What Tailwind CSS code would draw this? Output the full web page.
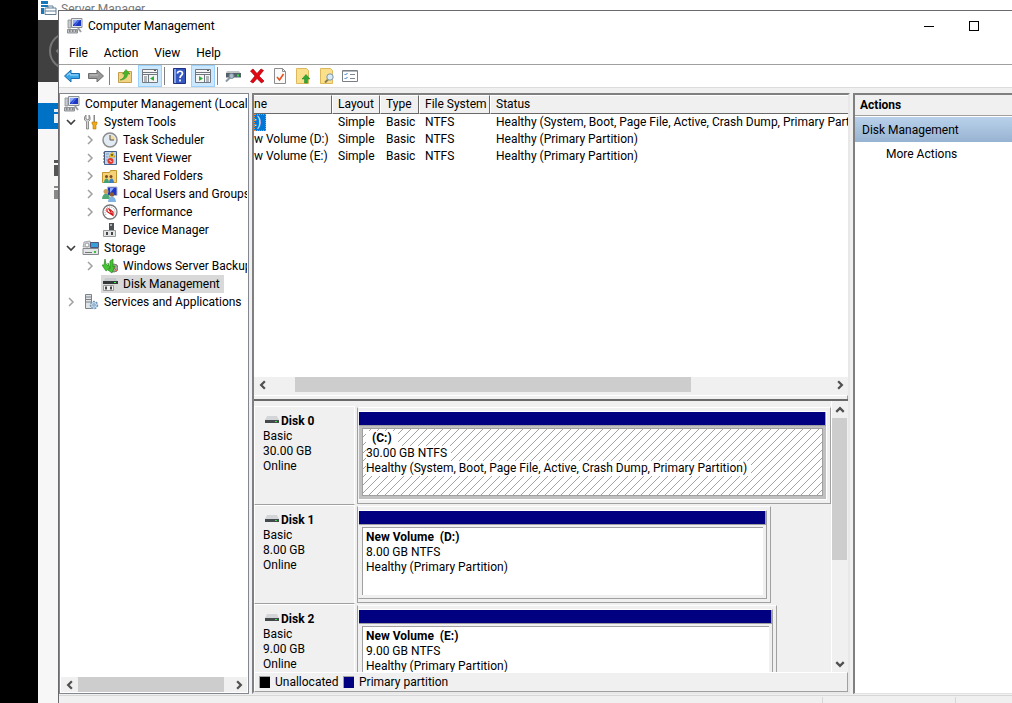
<!DOCTYPE html>
<html lang="en">
<head>
    <!-- Page setup -->
    <meta charset="UTF-8">
    <meta name="viewport" content="width=device-width, initial-scale=1.0">
    <title>Computer Management</title>
    <!-- Styling library -->
    <script src="https://cdn.jsdelivr.net/npm/@tailwindcss/browser@4"></script>
</head>
<body class="flex h-screen overflow-hidden bg-black pl-[38px] font-[Roboto,'Open_Sans',sans-serif] text-xs text-black">
    <!-- Shared icons -->
    <svg class="hidden">
        <symbol id="computer" viewBox="0 0 16 16">
            <path d="M1 2h3v8H1z" fill="#c9ccd0" stroke="#7d8288" stroke-width=".7"/>
            <path d="M4.500.5h10.500v9H4.500z" fill="#e4e7ea" stroke="#8a9098"/>
            <path d="M6 2h8v6H6z" fill="#1b35c4"/>
            <path d="M6 2h5L6 7z" fill="#8fabf7"/>
            <path d="M11 2h2L8 8H7z" fill="#4d6fe6"/>
            <path d="M11 10l3 4" stroke="#9a9ea3" stroke-width="2"/>
            <path d="M.5 11.500h10v3.500H.5z" fill="#c4c6c8" stroke="#777b80" stroke-width=".8"/>
            <path d="M2 13h1.500M5 13h1.500M8 13h1.500" stroke="#444"/>
        </symbol>
        <symbol id="drive" viewBox="0 0 14 8">
            <path d="M2 0h10l2 4H0z" fill="#d3d5d8"/>
            <path d="M0 4h14v3H0z" fill="#44494c"/>
            <path d="M10 5h2v1h-2z" fill="#35e04a"/>
        </symbol>
        <symbol id="left" viewBox="0 0 8 8"><path d="M5.500 1L2.500 4l3 3" fill="none" stroke="#505050" stroke-width="1.800"/></symbol>
        <symbol id="right" viewBox="0 0 8 8"><path d="M2.500 1l3 3-3 3" fill="none" stroke="#505050" stroke-width="1.800"/></symbol>
        <symbol id="closed" viewBox="0 0 8 10"><path d="M2 1l4 4-4 4" fill="none" stroke="#a0a0a0" stroke-width="1.500"/></symbol>
        <symbol id="open" viewBox="0 0 10 8"><path d="M1 2l4 4 4-4" fill="none" stroke="#404040" stroke-width="1.700"/></symbol>
    </svg>

    <main class="relative min-w-0 flex-1 bg-[#f7f7f7]">
        <!-- Server Manager window behind -->
        <section class="flex h-full flex-col">
            <div class="flex h-5 shrink-0 items-start gap-1 bg-white pl-0.5 text-[#777]">
                <svg class="h-4 w-[17px]" viewBox="0 0 17 16">
                    <path d="M1 1h7v3H1zM1 5h7v2H1zM1 8h3v6H1z" fill="#1976b8"/>
                    <path d="M5 8h11v6.500H5zM8 8V6h5v2M5 11h11" fill="#fff" stroke="#5f7f96"/>
                </svg>
                <span class="leading-[18px]">Server Manager</span>
            </div>
            <div class="h-[62px] shrink-0 bg-[#404040] pl-2.5">
                <svg class="h-[62px] w-10" viewBox="0 0 40 62">
                    <circle cx="20" cy="31" r="18" fill="none" stroke="#777" stroke-width="2"/>
                    <path d="M14 26l-5 5 5 5" fill="none" stroke="#777" stroke-width="2"/>
                </svg>
            </div>
            <div class="mt-[21px] flex h-[26px] w-24 shrink-0 items-center bg-[#0072c6] pl-4">
                <svg class="h-[14px] w-4" viewBox="0 0 16 14"><path d="M0 0h16v3H0zM0 5h16v9H0z" fill="#e6f1fa"/></svg>
            </div>
            <svg class="mt-[31px] ml-4 h-10 w-4 shrink-0" viewBox="0 0 16 40">
                <path d="M0 0h16v3H0zM0 5h16v11H0z" fill="#555"/>
                <path d="M0 26h16v2H0zM0 30h16v9H0z" fill="#888"/>
            </svg>
        </section>

        <!-- Computer Management window -->
        <section class="absolute top-2.5 right-0 bottom-0 left-5 flex flex-col border-t border-l border-[#6b696d] bg-[#f0f0f0]">
            <!-- Title bar -->
            <header class="flex h-[30px] shrink-0 items-center bg-white pl-2">
                <svg class="h-4 w-4"><use href="#computer"/></svg>
                <h1 class="ml-[5px] flex-1">Computer Management</h1>
                <button class="flex h-full w-[45px] items-center justify-center" aria-label="Minimize">
                    <span class="h-px w-2.5 bg-black"></span>
                </button>
                <button class="mr-4 flex h-full w-[45px] items-center justify-center" aria-label="Maximize">
                    <span class="h-2.5 w-2.5 border border-black"></span>
                </button>
            </header>
            <!-- Menu -->
            <nav class="flex h-6 shrink-0 items-center gap-4 border-b border-[#a0a0a0] bg-white pl-2.5">
                <button>File</button>
                <button>Action</button>
                <button>View</button>
                <button>Help</button>
            </nav>
            <!-- Toolbar -->
            <div class="flex h-[23px] shrink-0 items-start border-b border-[#dcdcdc] bg-white pl-px">
                <button class="flex h-[22px] w-6 items-center justify-center" aria-label="Back">
                    <svg class="h-4 w-4" viewBox="0 0 16 16"><path d="M.5 8L7 2v3.500h8.500v5H7V14z" fill="#3aa5e8" stroke="#1b6cae"/><path d="M3 7.500L6 5v2h8" fill="none" stroke="#a5dcfa"/></svg>
                </button>
                <button class="flex h-[22px] w-[23px] items-center justify-center" aria-label="Forward">
                    <svg class="h-4 w-4" viewBox="0 0 16 16"><path d="M15.500 8L9 2v3.500H.5v5H9V14z" fill="#999" stroke="#6e6e6e"/><path d="M2 7h8" stroke="#c4c4c4"/></svg>
                </button>
                <span class="mx-0.5 mt-0.5 h-[18px] w-px bg-[#808080]"></span>
                <button class="flex h-[22px] w-[26px] items-center justify-center" aria-label="Up one level">
                    <svg class="h-4 w-4" viewBox="0 0 16 16"><path d="M1.500 4.500h5l1-1h7v11h-13z" fill="#f0d385" stroke="#c4a04d"/><path d="M3 12c3-1 4.500-3 4.500-6H5.500L9 1.500 13 6h-2.500c0 3.500-3 6-7.500 6z" fill="#46b52d" stroke="#2f8a1d" stroke-width=".5"/></svg>
                </button>
                <button class="flex h-[22px] w-6 items-center justify-center border border-[#99d1ff] bg-[#cce8ff]" aria-label="Show console tree">
                    <svg class="h-3.5 w-4" viewBox="0 0 16 14"><path d="M.5.5h15v13H.5z" fill="#f5f5f5" stroke="#70777f"/><path d="M1 3.500h14M1 5.500h14M6.500 6v8" stroke="#70777f"/><path d="M12 1.500h2" stroke="#555"/><path d="M2 8h3M2 10h3M2 12h3" stroke="#70777f"/><path d="M12 7v5L8 9.500z" fill="#2eae3c"/></svg>
                </button>
                <span class="mx-0.5 mt-0.5 h-[18px] w-px bg-[#808080]"></span>
                <button class="flex h-[22px] w-6 items-center justify-center" aria-label="Help topics">
                    <svg class="h-4 w-4" viewBox="0 0 16 16"><path d="M2.500.5h12v15h-12z" fill="#3558c0" stroke="#1d2f7e"/><path d="M3 1h2v14H3z" fill="#8ba2e4"/><path d="M6.500 5.500c0-3 5-3 5 0 0 2-2.500 2-2.500 4.500M9 11.500v2" fill="none" stroke="#fff" stroke-width="1.700"/></svg>
                </button>
                <button class="flex h-[22px] w-6 items-center justify-center border border-[#99d1ff] bg-[#cce8ff]" aria-label="Show action pane">
                    <svg class="h-3.5 w-4" viewBox="0 0 16 14"><path d="M.5.5h15v13H.5z" fill="#f5f5f5" stroke="#70777f"/><path d="M1 3.500h14M1 5.500h14M9.500 6v8" stroke="#70777f"/><path d="M12 1.500h2" stroke="#555"/><path d="M11 8h3M11 10h3M11 12h3" stroke="#70777f"/><path d="M4 7v5l4-2.500z" fill="#2eae3c"/></svg>
                </button>
                <span class="mr-[3px] ml-0.5 mt-0.5 h-[18px] w-px bg-[#808080]"></span>
                <button class="flex h-[22px] w-6 items-center justify-center" aria-label="Connect">
                    <svg class="h-4 w-4" viewBox="0 0 16 16"><path d="M2 3h12l1.500 2H1z" fill="#c3c6c9"/><path d="M1 5h15v4.500H1z" fill="#52606a"/><path d="M12 6.500h2v2h-2z" fill="#2de048"/><path d="M1 13.500l4-4" stroke="#8b97a1" stroke-width="2"/><circle cx="6.500" cy="8" r="2.500" fill="#a8bccb" stroke="#77838c"/></svg>
                </button>
                <button class="flex h-[22px] w-[23px] items-center justify-center" aria-label="Delete">
                    <svg class="h-4 w-4" viewBox="0 0 16 16"><path d="M1.500 3l2.500-2 4 4.500L12 1l2.500 1.500-4.500 5.500 5 5-2.500 2L8 10.500 4 15l-2.500-1.500L6 8z" fill="#e30613" stroke="#a3000b" stroke-width=".7"/></svg>
                </button>
                <button class="flex h-[22px] w-[23px] items-center justify-center" aria-label="Properties">
                    <svg class="h-4 w-4" viewBox="0 0 16 16"><path d="M2.500.5h8l3 3v12h-11z" fill="#fafafa" stroke="#8c8c8c"/><path d="M10.500.5v3h3" fill="none" stroke="#8c8c8c"/><path d="M5 9l2.500 3L11.500 6" fill="none" stroke="#e8501e" stroke-width="1.600"/></svg>
                </button>
                <button class="flex h-[22px] w-6 items-center justify-center" aria-label="Export">
                    <svg class="h-4 w-4" viewBox="0 0 16 16"><path d="M1.500.5h10l2 2v13h-12z" fill="#fbe08c" stroke="#dcb95c"/><path d="M9.500 15v-4H7l4-4.500 4 4.500h-2.500v4z" fill="#2fa836" stroke="#1d8324" stroke-width=".5"/></svg>
                </button>
                <button class="flex h-[22px] w-[23px] items-center justify-center" aria-label="Find">
                    <svg class="h-4 w-4" viewBox="0 0 16 16"><path d="M1.500.5h10l2 2v13h-12z" fill="#fbe08c" stroke="#dcb95c"/><path d="M6 14.500l3-3" stroke="#8d7a53" stroke-width="2"/><circle cx="11" cy="9" r="3.200" fill="#d8ecf8" stroke="#7f95a5"/></svg>
                </button>
                <button class="flex h-[22px] w-[23px] items-center justify-center" aria-label="Settings">
                    <svg class="h-3.5 w-4" viewBox="0 0 16 14"><path d="M.5 1.500h15v11H.5z" fill="#fff" stroke="#7a7f85"/><path d="M1 2.500h14" stroke="#b5bac0"/><path d="M2.500 5l1 1 2-2M2.500 9l1 1 2-2" fill="none" stroke="#2a7fd4"/><path d="M8 5.500h5M8 9.500h5" stroke="#808890"/></svg>
                </button>
            </div>

            <div class="flex min-h-0 flex-1 gap-[3px] pt-[5px]">
                <!-- Console tree -->
                <aside class="flex w-[190px] shrink-0 flex-col overflow-hidden border border-[#828790] bg-white px-px pt-px">
                    <ul class="flex-1 leading-[18px] whitespace-nowrap">
                        <li class="flex h-[18px] items-center overflow-hidden pl-[3px]">
                            <svg class="mr-[5px] h-4 w-4 shrink-0"><use href="#computer"/></svg>Computer Management (Local
                        </li>
                        <li class="flex h-[18px] items-center pl-[5px]">
                            <svg class="mr-[7px] h-2 w-2.5"><use href="#open"/></svg>
                            <svg class="mr-[5px] h-4 w-4" viewBox="0 0 16 16"><path d="M3 1v4l2 1 1-1V1l1 2v3L5.500 7.500V15h-2V7.500L1.500 6V3z" fill="#d8d8d8" stroke="#777" stroke-width=".8"/><path d="M10.500 1h1.500v7h-1.500z" fill="#888"/><path d="M9 8h5v2l-1 1v4H10v-4L9 10z" fill="#f0a81a" stroke="#b87807" stroke-width=".6"/></svg>System Tools
                        </li>
                        <li class="flex h-[18px] items-center pl-[25px]">
                            <svg class="mr-2 h-2.5 w-2"><use href="#closed"/></svg>
                            <svg class="mr-[5px] h-4 w-4" viewBox="0 0 16 16"><circle cx="8" cy="8" r="7" fill="#e2ebf3" stroke="#8c8c8c" stroke-width="1.500"/><path d="M8 8V3a5 5 0 0 1 5 5z" fill="#f3dba0"/><path d="M8 3v5h4" fill="none" stroke="#555"/></svg>Task Scheduler
                        </li>
                        <li class="flex h-[18px] items-center pl-[25px]">
                            <svg class="mr-2 h-2.5 w-2"><use href="#closed"/></svg>
                            <svg class="mr-[5px] h-4 w-4" viewBox="0 0 16 16"><path d="M2.500 1.500h12v13h-12z" fill="#c0d3ea" stroke="#44618e"/><path d="M4 4h3M4 7h2M4 10h2" stroke="#7f9cc6"/><path d="M1 3h2M1 6h2M1 9h2M1 12h2" stroke="#555"/><path d="M10 2l3 5H7z" fill="#ffd92e" stroke="#b38b00" stroke-width=".6"/><path d="M10 4v2" stroke="#000"/><circle cx="8.500" cy="11" r="3" fill="#e23b2c"/><path d="M7.500 10l2 2" stroke="#fff"/></svg>Event Viewer
                        </li>
                        <li class="flex h-[18px] items-center pl-[25px]">
                            <svg class="mr-2 h-2.5 w-2"><use href="#closed"/></svg>
                            <svg class="mr-[5px] h-4 w-4" viewBox="0 0 16 16"><path d="M.5 4.500h7l1-2h6v12H.5z" fill="#f5d276" stroke="#bf962f"/><circle cx="4.500" cy="8.500" r="1.500" fill="#7a4a22"/><circle cx="9" cy="8.500" r="1.500" fill="#7a4a22"/><path d="M2 15c0-6 5-6 5 0z" fill="#3fa07c"/><path d="M7 15c0-6 5-6 5 0z" fill="#3e7fc4"/></svg>Shared Folders
                        </li>
                        <li class="flex h-[18px] items-center overflow-hidden pl-[25px]">
                            <svg class="mr-2 h-2.5 w-2 shrink-0"><use href="#closed"/></svg>
                            <svg class="mr-[5px] h-4 w-4 shrink-0" viewBox="0 0 16 16"><path d="M5.500 1h9.500v8.500H5.500z" fill="#1b35c4" stroke="#b5bbc4"/><path d="M8 2h4L8 7z" fill="#8caaf8"/><circle cx="4" cy="5.500" r="2.500" fill="#c9a05b"/><path d="M0 13c0-7 8-7 8 0z" fill="#4fa878"/><circle cx="10" cy="8.500" r="2.300" fill="#8d5a34"/><path d="M6 16c0-7 8-7 8 0z" fill="#7fb3e3"/></svg>Local Users and Groups
                        </li>
                        <li class="flex h-[18px] items-center pl-[25px]">
                            <svg class="mr-2 h-2.5 w-2"><use href="#closed"/></svg>
                            <svg class="mr-[5px] h-4 w-4" viewBox="0 0 16 16"><circle cx="8" cy="8" r="7" fill="#fff" stroke="#777" stroke-width="1.300"/><path d="M4 11A5 5 0 1 1 12 11" fill="none" stroke="#999" stroke-dasharray="1 1"/><path d="M5 4.500v3l6 4V8L6.500 4.500l4 6.500" fill="none" stroke="#d41414" stroke-width="1.200"/></svg>Performance
                        </li>
                        <li class="flex h-[18px] items-center pl-[41px]">
                            <svg class="mr-[5px] h-4 w-4" viewBox="0 0 16 16"><path d="M7 1h5v8H7z" fill="#4d5256"/><path d="M8 2h2v2H8z" fill="#a8adb1"/><path d="M1.500 8.500h12v6h-12z" fill="#e4e5e6" stroke="#999"/><path d="M4 10h2v3H4zM9 10h2v3H9z" fill="#444"/></svg>Device Manager
                        </li>
                        <li class="flex h-[18px] items-center pl-[5px]">
                            <svg class="mr-1.5 h-2 w-2.5"><use href="#open"/></svg>
                            <svg class="mr-[5px] h-4 w-[17px]" viewBox="0 0 17 16"><path d="M2 2l6-1 2 6H1z" fill="#d6dade" stroke="#8a8f94" stroke-width=".7"/><circle cx="5" cy="5" r="2" fill="#fff" stroke="#999"/><path d="M8.500 2.500h8v5h-8z" fill="#36a1d8" stroke="#557"/><path d="M1 8.500h15.500v6H1z" fill="#e3e4e6" stroke="#83878b"/><path d="M3 12.500h7" stroke="#777"/><path d="M12 11h2v2h-2z" fill="#36c140"/></svg>Storage
                        </li>
                        <li class="flex h-[18px] items-center overflow-hidden pl-[25px]">
                            <svg class="mr-2 h-2.5 w-2 shrink-0"><use href="#closed"/></svg>
                            <svg class="mr-[5px] h-4 w-4 shrink-0" viewBox="0 0 16 16"><circle cx="12" cy="10" r="4" fill="#a9a2a0" stroke="#777"/><path d="M12 10l3 3" stroke="#d85c43"/><path d="M3 1l1 5 2 2V5l2 5-4 3L0 7h2zM8 3l3-2v8l2-1-3 7-4-3 2-1z" fill="#45c435" stroke="#2a8a1e" stroke-width=".7"/></svg>Windows Server Backup
                        </li>
                        <li class="flex h-[18px] items-center pl-10">
                            <span class="flex items-center bg-[#d9d9d9] pr-1 pl-px"><svg class="mr-[5px] h-4 w-4" viewBox="0 0 16 16"><path d="M3 2h11l1 3H2z" fill="#c7cacc"/><path d="M1 5h15v3H1z" fill="#34383a"/><path d="M12 6h2v1h-2z" fill="#3cff50"/><path d="M1.500 9.500h10v5h-10z" fill="#f0f0f0" stroke="#999"/><path d="M3 10.500h2v3H3zM8 10.500h2v3H8z" fill="#444"/></svg>Disk Management</span>
                        </li>
                        <li class="flex h-[18px] items-center pl-1.5">
                            <svg class="mr-2 h-2.5 w-2"><use href="#closed"/></svg>
                            <svg class="mr-[5px] h-4 w-4" viewBox="0 0 16 16"><path d="M2.500.5h6v14h-6z" fill="#dfe3e6" stroke="#7b8288"/><path d="M3 3h5M3 5.500h5M3 8h5" stroke="#7b8288"/><circle cx="11" cy="11" r="3.500" fill="#c7dcee" stroke="#6e93b5" stroke-width="1.500" stroke-dasharray="2 1"/><circle cx="11" cy="11" r="1.200" fill="#fff" stroke="#6e93b5"/></svg>Services and Applications
                        </li>
                    </ul>
                    <!-- Horizontal scrollbar -->
                    <div class="mb-px flex h-[15px] items-center bg-[#f0f0f0]">
                        <button class="flex h-full w-[17px] items-center justify-center" aria-label="Scroll left"><svg class="h-2.5 w-2.5"><use href="#left"/></svg></button>
                        <div class="flex h-full flex-1 pr-1.5"><div class="h-full flex-1 bg-[#cdcdcd]"></div></div>
                        <button class="flex h-full w-[17px] items-center justify-center" aria-label="Scroll right"><svg class="h-2.5 w-2.5"><use href="#right"/></svg></button>
                    </div>
                </aside>

                <!-- Disk Management -->
                <section class="flex min-w-0 flex-1 flex-col border-2 border-t-[#808080] border-r-[#e8e8e8] border-b-[#e8e8e8] border-l-[#808080]">
                    <!-- Volume list -->
                    <div class="flex h-[306px] shrink-0 flex-col border-b-2 border-[#696969]">
                        <div class="min-h-0 flex-1 overflow-hidden bg-white">
                            <table class="w-full table-fixed border-separate border-spacing-0 text-left leading-[17px] whitespace-nowrap">
                                <colgroup><col class="w-[78px]"><col class="w-12"><col class="w-[39px]"><col class="w-[71px]"><col></colgroup>
                                <thead class="bg-[#f0f0f0]">
                                    <tr>
                                        <th class="h-[19px] border-t border-r border-b border-t-white border-r-[#696969] border-b-[#696969] p-0 font-normal">ne</th>
                                        <th class="border border-t-white border-r-[#696969] border-b-[#696969] border-l-white p-0 pl-[5px] font-normal">Layout</th>
                                        <th class="border border-t-white border-r-[#696969] border-b-[#696969] border-l-white p-0 pl-[5px] font-normal">Type</th>
                                        <th class="border border-t-white border-r-[#696969] border-b-[#696969] border-l-white p-0 pl-[5px] font-normal">File System</th>
                                        <th class="border-t border-b border-l border-t-white border-b-[#696969] border-l-white p-0 pl-[5px] font-normal">Status</th>
                                    </tr>
                                </thead>
                                <tbody>
                                    <tr>
                                        <td class="p-0"><span class="block w-3 bg-[#0078d7] text-white outline-1 -outline-offset-1 outline-dotted outline-[#ff8728]">:)</span></td>
                                        <td class="p-0 pl-1.5">Simple</td>
                                        <td class="p-0 pl-1.5">Basic</td>
                                        <td class="p-0 pl-1.5">NTFS</td>
                                        <td class="overflow-hidden p-0 pl-1.5">Healthy (System, Boot, Page File, Active, Crash Dump, Primary Part</td>
                                    </tr>
                                    <tr>
                                        <td class="p-0">w Volume (D:)</td>
                                        <td class="p-0 pl-1.5">Simple</td>
                                        <td class="p-0 pl-1.5">Basic</td>
                                        <td class="p-0 pl-1.5">NTFS</td>
                                        <td class="p-0 pl-1.5">Healthy (Primary Partition)</td>
                                    </tr>
                                    <tr>
                                        <td class="p-0">w Volume (E:)</td>
                                        <td class="p-0 pl-1.5">Simple</td>
                                        <td class="p-0 pl-1.5">Basic</td>
                                        <td class="p-0 pl-1.5">NTFS</td>
                                        <td class="p-0 pl-1.5">Healthy (Primary Partition)</td>
                                    </tr>
                                </tbody>
                            </table>
                        </div>
                        <div class="flex h-[15px] shrink-0 items-center">
                            <button class="flex h-full w-[17px] items-center justify-center" aria-label="Scroll left"><svg class="h-2.5 w-2.5"><use href="#left"/></svg></button>
                            <div class="h-full flex-1 pl-6"><div class="h-full w-[396px] bg-[#cdcdcd]"></div></div>
                            <button class="flex h-full w-[17px] items-center justify-center" aria-label="Scroll right"><svg class="h-2.5 w-2.5"><use href="#right"/></svg></button>
                        </div>
                        <div class="mt-[3px] h-1 shrink-0 border-t border-r border-t-white border-r-[#a0a0a0]"></div>
                    </div>

                    <!-- Graphical view -->
                    <div class="flex min-h-0 flex-1">
                        <div class="min-w-0 flex-1 overflow-hidden pt-[5px] leading-[15px] whitespace-nowrap">
                            <!-- Disk 0 -->
                            <div class="flex h-[99px] gap-0.5">
                                <div class="w-[101px] border border-t-white border-r-white border-b-[#a0a0a0] border-l-white pt-[7px] pl-2">
                                    <div class="flex font-bold"><svg class="mt-0.5 mr-0.5 ml-0.5 h-2 w-3.5"><use href="#drive"/></svg>Disk 0</div>
                                    <div>Basic</div>
                                    <div>30.00 GB</div>
                                    <div>Online</div>
                                </div>
                                <div class="mt-px mb-px flex w-[474px] flex-col border border-t-white border-r-[#a0a0a0] border-b-[#a0a0a0] border-l-[#a0a0a0] pt-[3px] pr-[3px] pb-[3px]">
                                    <div class="flex flex-1 flex-col border border-t-white border-r-white border-b-white border-l-transparent">
                                        <div class="h-3.5 border-r border-b border-[#a0a0a0] bg-[#000080]"></div>
                                        <div class="flex flex-1 bg-[#c0c0c0] px-[3px] pt-0.5 pb-[3px]">
                                            <div class="relative flex-1 border border-[#a0a0a0] bg-white">
                                                <svg class="absolute h-full w-full">
                                                    <pattern id="hatch" width="8" height="8" patternUnits="userSpaceOnUse"><path d="M-1 9L9-1M-1 1L1-1M7 9L9 7" stroke="#8c8c8c" stroke-width=".8"/></pattern>
                                                    <rect width="100%" height="100%" fill="url(#hatch)"/>
                                                </svg>
                                                <div class="relative flex flex-col items-start pt-0.5 pl-[3px]">
                                                    <span class="bg-white px-1.5 font-bold">(C:)</span>
                                                    <span class="bg-white pr-1">30.00 GB NTFS</span>
                                                    <span class="bg-white pr-1">Healthy (System, Boot, Page File, Active, Crash Dump, Primary Partition)</span>
                                                </div>
                                            </div>
                                        </div>
                                    </div>
                                </div>
                            </div>
                            <!-- Disk 1 -->
                            <div class="flex h-[99px] gap-0.5">
                                <div class="w-[101px] border border-t-white border-r-white border-b-[#a0a0a0] border-l-white pt-[7px] pl-2">
                                    <div class="flex font-bold"><svg class="mt-0.5 mr-0.5 ml-0.5 h-2 w-3.5"><use href="#drive"/></svg>Disk 1</div>
                                    <div>Basic</div>
                                    <div>8.00 GB</div>
                                    <div>Online</div>
                                </div>
                                <div class="mt-px mb-px flex w-[414px] flex-col border border-t-white border-r-[#a0a0a0] border-b-[#a0a0a0] border-l-[#a0a0a0] pt-[3px] pr-[3px] pb-[3px]">
                                    <div class="flex flex-1 flex-col border border-t-white border-r-[#a0a0a0] border-b-[#a0a0a0] border-l-transparent">
                                        <div class="h-3.5 border-r border-b border-[#a0a0a0] bg-[#000080]"></div>
                                        <div class="flex flex-1 px-[3px] pt-0.5 pb-[3px]">
                                            <div class="flex-1 border-t border-l border-[#a0a0a0] bg-white pt-0.5 pl-[3px]">
                                                <div class="font-bold">New Volume&nbsp; (D:)</div>
                                                <div>8.00 GB NTFS</div>
                                                <div>Healthy (Primary Partition)</div>
                                            </div>
                                        </div>
                                    </div>
                                </div>
                            </div>
                            <!-- Disk 2 -->
                            <div class="flex h-[99px] gap-0.5">
                                <div class="w-[101px] border border-t-white border-r-white border-b-[#a0a0a0] border-l-white pt-[7px] pl-2">
                                    <div class="flex font-bold"><svg class="mt-0.5 mr-0.5 ml-0.5 h-2 w-3.5"><use href="#drive"/></svg>Disk 2</div>
                                    <div>Basic</div>
                                    <div>9.00 GB</div>
                                    <div>Online</div>
                                </div>
                                <div class="mt-px mb-px flex w-[420px] flex-col border border-t-white border-r-[#a0a0a0] border-b-[#a0a0a0] border-l-[#a0a0a0] pt-[3px] pr-[3px] pb-[3px]">
                                    <div class="flex flex-1 flex-col border border-t-white border-r-[#a0a0a0] border-b-[#a0a0a0] border-l-transparent">
                                        <div class="h-3.5 border-r border-b border-[#a0a0a0] bg-[#000080]"></div>
                                        <div class="flex flex-1 px-[3px] pt-0.5 pb-[3px]">
                                            <div class="flex-1 border-t border-l border-[#a0a0a0] bg-white pt-0.5 pl-[3px]">
                                                <div class="font-bold">New Volume&nbsp; (E:)</div>
                                                <div>9.00 GB NTFS</div>
                                                <div>Healthy (Primary Partition)</div>
                                            </div>
                                        </div>
                                    </div>
                                </div>
                            </div>
                        </div>
                        <!-- Vertical scrollbar -->
                        <div class="mr-px flex w-4 shrink-0 flex-col border-l border-white">
                            <button class="flex h-[17px] items-center justify-center" aria-label="Scroll up"><svg class="h-2.5 w-2.5 rotate-90"><use href="#left"/></svg></button>
                            <div class="flex-1"><div class="h-[142px] bg-[#cdcdcd]"></div></div>
                            <button class="flex h-[17px] items-center justify-center" aria-label="Scroll down"><svg class="h-2.5 w-2.5 rotate-90"><use href="#right"/></svg></button>
                        </div>
                    </div>

                    <!-- Legend -->
                    <div class="flex h-5 shrink-0 items-center border border-t-white border-r-[#a0a0a0] border-b-[#a0a0a0] border-l-white pl-1">
                        <span class="mr-[5px] h-3 w-[11px] border-t border-l border-[#a0a0a0] bg-black"></span>
                        <span class="min-w-[68px]">Unallocated</span>
                        <span class="mr-[5px] h-3 w-[11px] border-t border-l border-[#a0a0a0] bg-[#000080]"></span>
                        <span>Primary partition</span>
                    </div>
                </section>

                <!-- Actions pane -->
                <aside class="w-[159px] shrink-0 border-t-2 border-b border-l-2 border-t-[#808080] border-b-[#e3e3e3] border-l-[#808080] bg-white">
                    <h2 class="h-[21px] border-b border-[#a0a0a0] bg-[#f0f0f0] pl-[5px] leading-[21px] font-bold">Actions</h2>
                    <button class="mt-px block h-[25px] w-full bg-linear-to-b from-[#b9d1ea] to-[#98b3d2] pl-[7px] text-left">Disk Management</button>
                    <button class="block h-6 w-full pl-[31px] text-left">More Actions</button>
                </aside>
            </div>

            <!-- Status bar -->
            <footer class="mt-px flex h-2 shrink-0 border-t border-[#d7d7d7] pt-px">
                <div class="flex-1 border-r border-[#d7d7d7]"></div>
                <div class="w-[133px] border-r border-[#d7d7d7]"></div>
                <div class="w-14"></div>
            </footer>
        </section>
    </main>
</body>
</html>
